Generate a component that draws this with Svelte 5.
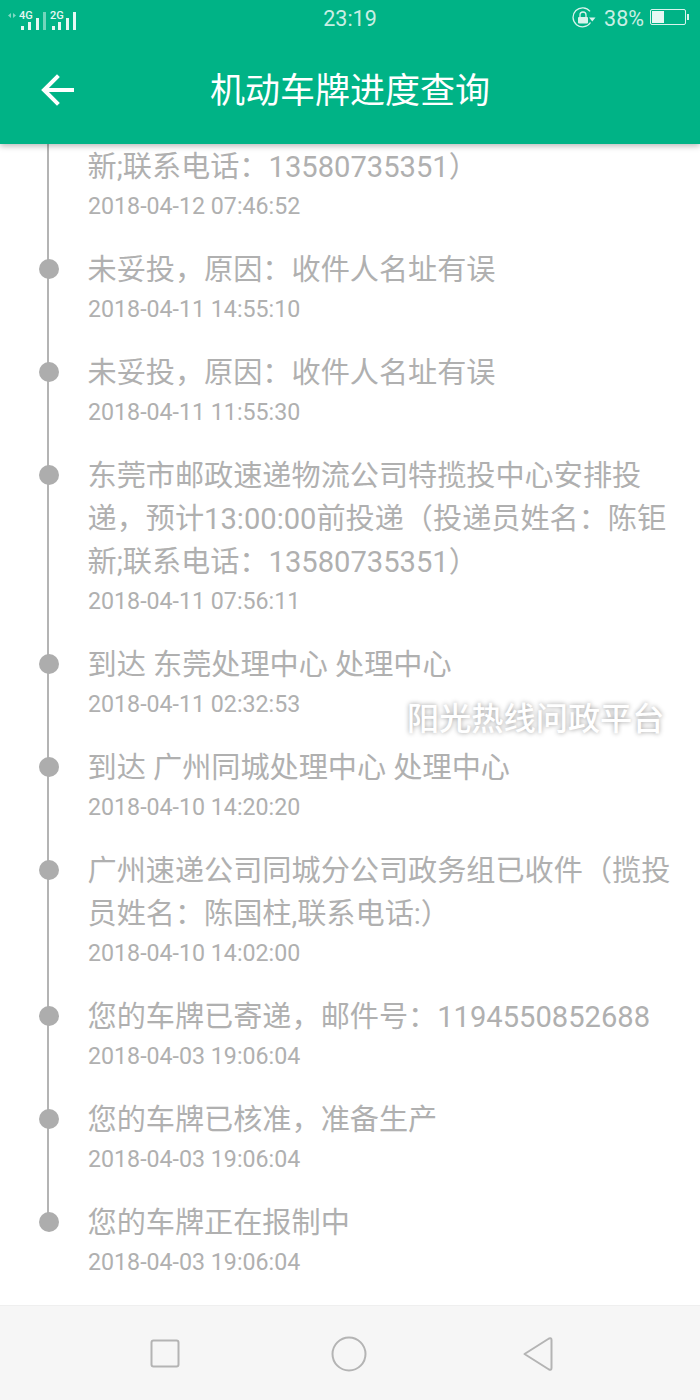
<script>
  const signals = [
    { label: "4G", labelX: 19, bars: [21, 28, 36, 43], faintLast: true },
    { label: "2G", labelX: 50, bars: [52, 58, 66, 73], faintLast: false },
  ];
  const barHeights = [4, 8, 12, 18];

  const steps = [
    { lines: ["新;联系电话：13580735351）"], time: "2018-04-12 07:46:52", cut: true },
    { lines: ["未妥投，原因：收件人名址有误"], time: "2018-04-11 14:55:10" },
    { lines: ["未妥投，原因：收件人名址有误"], time: "2018-04-11 11:55:30" },
    {
      lines: ["东莞市邮政速递物流公司特揽投中心安排投", "递，预计13:00:00前投递（投递员姓名：陈钜", "新;联系电话：13580735351）"],
      time: "2018-04-11 07:56:11",
    },
    { lines: ["到达 东莞处理中心 处理中心"], time: "2018-04-11 02:32:53" },
    { lines: ["到达 广州同城处理中心 处理中心"], time: "2018-04-10 14:20:20" },
    { lines: ["广州速递公司同城分公司政务组已收件（揽投", "员姓名：陈国柱,联系电话:）"], time: "2018-04-10 14:02:00" },
    { lines: ["您的车牌已寄递，邮件号：1194550852688"], time: "2018-04-03 19:06:04" },
    { lines: ["您的车牌已核准，准备生产"], time: "2018-04-03 19:06:04" },
    { lines: ["您的车牌正在报制中"], time: "2018-04-03 19:06:04" },
  ];
</script>

<div class="page">
  <header class="top">
    <div class="status">
      <svg class="signal" width="80" height="30" viewBox="0 0 80 30" fill="#fff">
        <path d="M11 9v5l-3-2.500zM13 9v5l3-2.500z" opacity="0.5" />
        {#each signals as s}
          <text x={s.labelX} y="15" font-size="11" font-weight="500" font-family="Roboto, sans-serif" opacity="0.9">{s.label}</text>
          {#each s.bars as x, i}
            <rect {x} y={26 - barHeights[i]} width="3" height={barHeights[i]} opacity={s.faintLast && i === 3 ? 0.45 : 0.9} />
          {/each}
        {/each}
      </svg>
      <span class="clock">23:19</span>
      <div class="status-right">
        <svg class="lock" width="24" height="22" viewBox="0 0 24 22" fill="none" stroke="#fff" stroke-width="1.300">
          <path d="M18 4.400A9.500 9.500 0 1 0 18.500 15.500" />
          <path d="M17 10.500h6.500l-3.250 4z" fill="#fff" stroke="none" />
          <rect x="6" y="10" width="10" height="6.500" rx="1" fill="#fff" stroke="none" />
          <path d="M8 10V8a3 3 0 0 1 6 0v2" />
        </svg>
        <span class="pct">38%</span>
        <div class="battery"><i></i></div>
        <b class="nub"></b>
      </div>
    </div>
    <div class="bar">
      <svg class="back" width="36" height="34" viewBox="0 0 36 34" fill="none" stroke="#fff" stroke-width="4" stroke-linecap="square">
        <path d="M32 17H5M17 4L4 17l13 13" />
      </svg>
      <h1>机动车牌进度查询</h1>
    </div>
  </header>

  <main class="list">
    {#each steps as step, i}
      <section class="step" class:cut={step.cut} class:last={i === steps.length - 1}>
        {#each step.lines as line}
          <p class="text">{line}</p>
        {/each}
        <p class="time">{step.time}</p>
      </section>
    {/each}
    <div class="mark">阳光热线问政平台</div>
  </main>

  <footer class="nav">
    <svg class="square" width="30" height="30" viewBox="0 0 30 30" fill="none" stroke="#b4b4b4" stroke-width="2">
      <rect x="1.500" y="1.500" width="27" height="26" rx="2" />
    </svg>
    <svg width="36" height="36" viewBox="0 0 36 36" fill="none" stroke="#b4b4b4" stroke-width="2">
      <circle cx="18" cy="18" r="16.500" />
    </svg>
    <svg class="tri" width="32" height="36" viewBox="0 0 32 36" fill="none" stroke="#b4b4b4" stroke-width="2" stroke-linejoin="round">
      <path d="M2.500 18 27 2.500q2.500-1 2.500 1.500v28q0 2.500-2.500 1.500z" />
    </svg>
  </footer>
</div>

<style>
  :global(body) {
    margin: 0;
    background: #fff;
  }

  .page {
    width: 700px;
    height: 1400px;
    display: flex;
    flex-direction: column;
    overflow: hidden;
    font-family: Roboto, "Noto Sans CJK SC", sans-serif;
  }

  .top {
    height: 144px;
    flex: none;
    background: #00b386;
    color: #fff;
    box-shadow: 0 2px 6px rgba(0, 0, 0, 0.28);
    position: relative;
    z-index: 1;
  }

  .status {
    height: 36px;
    display: grid;
    grid-template-columns: 1fr auto 1fr;
    align-items: center;
  }

  .signal {
    display: block;
    margin-top: 1px;
  }

  .clock {
    font-size: 21.500px;
    color: rgba(255, 255, 255, 0.8);
  }

  .status-right {
    display: flex;
    align-items: center;
    justify-content: flex-end;
    padding-right: 11px;
  }

  .lock {
    opacity: 0.85;
    margin-bottom: 1px;
  }

  .pct {
    font-size: 21.500px;
    color: rgba(255, 255, 255, 0.8);
    margin: 0 6px 0 8px;
  }

  .battery {
    width: 32px;
    height: 12px;
    border: 1px solid rgba(255, 255, 255, 0.85);
    border-radius: 2px;
    padding: 1px;
    margin-bottom: 2px;
  }

  .battery i {
    display: block;
    width: 38%;
    height: 100%;
    background: #e6f8f3;
  }

  .nub {
    width: 2px;
    height: 6px;
    margin: 0 0 2px 1px;
    background: rgba(255, 255, 255, 0.85);
  }

  .bar {
    height: 108px;
    display: grid;
    grid-template-columns: 1fr auto 1fr;
    align-items: center;
  }

  .back {
    margin-left: 40px;
    margin-top: -1px;
  }

  h1 {
    margin: 4px 0 0;
    font-size: 35px;
    font-weight: 400;
    line-height: 44px;
  }

  .list {
    flex: 1;
    position: relative;
    padding-left: 88px;
    color: #b0b0b0;
  }

  .step {
    position: relative;
    padding-bottom: 26px;
  }

  .step.cut {
    padding-top: 2px;
  }

  .step::before {
    content: "";
    position: absolute;
    left: -41px;
    top: 0;
    bottom: 0;
    width: 2px;
    background: #b4b4b4;
  }

  .step::after {
    content: "";
    position: absolute;
    left: -49px;
    top: 10px;
    width: 20px;
    height: 20px;
    border-radius: 50%;
    background: #adadad;
  }

  .step.cut::after {
    display: none;
  }

  .step.last::before {
    bottom: auto;
    height: 20px;
  }

  .text {
    margin: 0 0 0 -0.500px;
    font-size: 29.150px;
    line-height: 43px;
    white-space: nowrap;
  }

  .time {
    margin: 0;
    font-size: 23.200px;
    line-height: 34px;
  }

  .mark {
    position: absolute;
    left: 407px;
    top: 555px;
    font-size: 32.200px;
    line-height: 40px;
    font-weight: 500;
    color: #fff;
    white-space: nowrap;
    text-shadow: 0 0 5px rgba(0, 0, 0, 0.4);
  }

  .nav {
    height: 96px;
    flex: none;
    box-sizing: border-box;
    background: #f6f6f6;
    border-top: 1px solid #efefef;
    display: flex;
    align-items: center;
    justify-content: center;
    gap: 153px;
    padding-left: 4px;
  }

  .square {
    margin-right: -2px;
  }

  .tri {
    margin-left: 2px;
  }
</style>
